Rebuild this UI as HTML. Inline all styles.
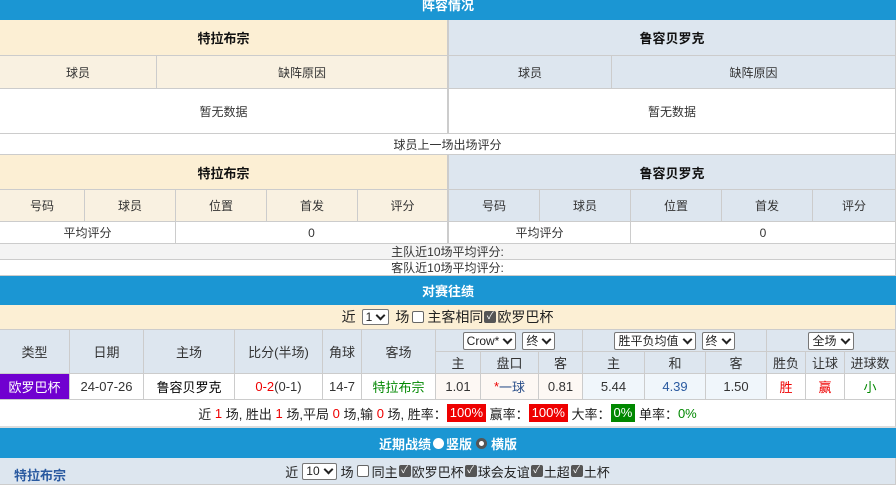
<!DOCTYPE html>
<html><head><meta charset="utf-8"><style>
*{box-sizing:border-box;margin:0;padding:0}
body{width:896px;height:485px;overflow:hidden;background:#fff;font-family:"Liberation Sans","Noto Sans CJK SC",sans-serif;font-size:12px;color:#333;position:relative}
.c{position:absolute;display:flex;align-items:center;justify-content:center;border-right:1px solid #ccc;border-bottom:1px solid #ccc;white-space:nowrap}
.bl{background:#1b96d3;color:#fff;font-weight:bold;font-size:13px;border:none}
.cr{background:#fcefd4}.cr2{background:#f9f1e1}.lb{background:#dde6ef}
.b{font-weight:bold;color:#111;font-size:13px}
.sel{display:inline-flex;align-items:center;border:1px solid #777;border-radius:2px;background:#fff;height:18px;padding:0 3px;font-size:12px;color:#222;margin:0 3px}
.sel:after{content:"";width:5px;height:5px;border-right:2px solid #222;border-bottom:2px solid #222;transform:rotate(45deg);margin:-3px 1px 0 5px}
.cb{display:inline-block;width:12px;height:12px;border:1px solid #666;border-radius:2px;background:#fff;margin:0 3px;vertical-align:middle}
.ck{display:inline-block;width:12px;height:12px;background:#555;border-radius:2px;color:#fff;font-size:10px;line-height:12px;text-align:center;margin:0 1px;vertical-align:middle}
.r{color:#e00}.g{color:#080}
.tag{display:inline-block;color:#fff;padding:0 3px;height:18px;line-height:18px}
</style></head><body>
<div class="c bl" style="left:0;top:0;width:896px;height:20px;overflow:hidden"><span style="position:relative;top:-6px">阵容情况</span></div>
<div class="c cr b" style="left:0;top:20px;width:449px;height:36px;border-right:2px solid #ccc">特拉布宗</div>
<div class="c lb b" style="left:449px;top:20px;width:447px;height:36px">鲁容贝罗克</div>
<div class="c cr2" style="left:0;top:56px;width:157px;height:33px">球员</div>
<div class="c cr2" style="left:157px;top:56px;width:292px;height:33px;border-right:2px solid #ccc">缺阵原因</div>
<div class="c lb" style="left:449px;top:56px;width:163px;height:33px">球员</div>
<div class="c lb" style="left:612px;top:56px;width:284px;height:33px">缺阵原因</div>
<div class="c" style="left:0;top:89px;width:449px;height:45px;border-right:2px solid #ccc">暂无数据</div>
<div class="c" style="left:449px;top:89px;width:447px;height:45px">暂无数据</div>
<div class="c" style="left:0;top:134px;width:896px;height:21px">球员上一场出场评分</div>
<div class="c cr b" style="left:0;top:155px;width:449px;height:35px;border-right:2px solid #ccc">特拉布宗</div>
<div class="c lb b" style="left:449px;top:155px;width:447px;height:35px">鲁容贝罗克</div>
<div class="c cr2" style="left:0;top:190px;width:85px;height:32px">号码</div>
<div class="c cr2" style="left:85px;top:190px;width:91px;height:32px">球员</div>
<div class="c cr2" style="left:176px;top:190px;width:91px;height:32px">位置</div>
<div class="c cr2" style="left:267px;top:190px;width:91px;height:32px">首发</div>
<div class="c cr2" style="left:358px;top:190px;width:91px;height:32px;border-right:2px solid #ccc">评分</div>
<div class="c lb" style="left:449px;top:190px;width:91px;height:32px">号码</div>
<div class="c lb" style="left:540px;top:190px;width:91px;height:32px">球员</div>
<div class="c lb" style="left:631px;top:190px;width:91px;height:32px">位置</div>
<div class="c lb" style="left:722px;top:190px;width:91px;height:32px">首发</div>
<div class="c lb" style="left:813px;top:190px;width:83px;height:32px">评分</div>
<div class="c" style="left:0;top:222px;width:176px;height:22px">平均评分</div>
<div class="c" style="left:176px;top:222px;width:273px;height:22px;border-right:2px solid #ccc">0</div>
<div class="c" style="left:449px;top:222px;width:182px;height:22px">平均评分</div>
<div class="c" style="left:631px;top:222px;width:265px;height:22px">0</div>
<div class="c" style="left:0;top:244px;width:896px;height:16px;background:#f4f4f4">主队近10场平均评分:</div>
<div class="c" style="left:0;top:260px;width:896px;height:16px">客队近10场平均评分:</div>
<div class="c bl" style="left:0;top:276px;width:896px;height:29px">对赛往绩</div>
<div class="c" style="left:0;top:305px;width:896px;height:25px;background:#fcefd4;font-size:14px;color:#222">近 <span class="sel" style="height:16px;margin:0 6px">1</span>场<span class="cb"></span>主客相同 <span class="ck">✓</span>欧罗巴杯</div>
<div class="c lb" style="left:0;top:330px;width:70px;height:44px;font-size:13px">类型</div>
<div class="c lb" style="left:70px;top:330px;width:74px;height:44px;font-size:13px">日期</div>
<div class="c lb" style="left:144px;top:330px;width:91px;height:44px;font-size:13px">主场</div>
<div class="c lb" style="left:235px;top:330px;width:88px;height:44px;font-size:13px">比分(半场)</div>
<div class="c lb" style="left:323px;top:330px;width:39px;height:44px;font-size:13px">角球</div>
<div class="c lb" style="left:362px;top:330px;width:74px;height:44px;font-size:13px">客场</div>
<div class="c lb" style="left:436px;top:330px;width:147px;height:22px"><span class="sel">Crow*</span><span class="sel">终</span></div>
<div class="c lb" style="left:583px;top:330px;width:184px;height:22px"><span class="sel">胜平负均值</span><span class="sel">终</span></div>
<div class="c lb" style="left:767px;top:330px;width:129px;height:22px"><span class="sel">全场</span></div>
<div class="c lb" style="left:436px;top:352px;width:45px;height:22px;font-size:13px">主</div>
<div class="c lb" style="left:481px;top:352px;width:58px;height:22px;font-size:13px">盘口</div>
<div class="c lb" style="left:539px;top:352px;width:44px;height:22px;font-size:13px">客</div>
<div class="c lb" style="left:583px;top:352px;width:62px;height:22px;font-size:13px">主</div>
<div class="c lb" style="left:645px;top:352px;width:61px;height:22px;font-size:13px">和</div>
<div class="c lb" style="left:706px;top:352px;width:61px;height:22px;font-size:13px">客</div>
<div class="c lb" style="left:767px;top:352px;width:39px;height:22px;font-size:13px">胜负</div>
<div class="c lb" style="left:806px;top:352px;width:39px;height:22px;font-size:13px">让球</div>
<div class="c lb" style="left:845px;top:352px;width:51px;height:22px;font-size:13px">进球数</div>
<div class="c" style="left:0;top:374px;width:70px;height:26px;background:#7000d0;color:#fff;font-size:13px">欧罗巴杯</div>
<div class="c" style="left:70px;top:374px;width:74px;height:26px;font-size:13px">24-07-26</div>
<div class="c" style="left:144px;top:374px;width:91px;height:26px;font-size:13px;color:#000">鲁容贝罗克</div>
<div class="c" style="left:235px;top:374px;width:88px;height:26px;font-size:13px"><span class="r">0-2</span>(0-1)</div>
<div class="c" style="left:323px;top:374px;width:39px;height:26px;font-size:13px">14-7</div>
<div class="c g" style="left:362px;top:374px;width:74px;height:26px;font-size:13px">特拉布宗</div>
<div class="c" style="left:436px;top:374px;width:45px;height:26px;font-size:13px;background:#fdf8f4">1.01</div>
<div class="c" style="left:481px;top:374px;width:58px;height:26px;font-size:13px;background:#fdf8f4;color:#2a4f8a"><span class="r">*</span>一球</div>
<div class="c" style="left:539px;top:374px;width:44px;height:26px;font-size:13px;background:#fdf8f4">0.81</div>
<div class="c" style="left:583px;top:374px;width:62px;height:26px;font-size:13px;background:#f0f6fb">5.44</div>
<div class="c" style="left:645px;top:374px;width:61px;height:26px;font-size:13px;background:#f0f6fb;color:#2a5aa0">4.39</div>
<div class="c" style="left:706px;top:374px;width:61px;height:26px;font-size:13px;background:#f0f6fb">1.50</div>
<div class="c r" style="left:767px;top:374px;width:39px;height:26px;font-size:13px">胜</div>
<div class="c r" style="left:806px;top:374px;width:39px;height:26px;font-size:13px">赢</div>
<div class="c g" style="left:845px;top:374px;width:51px;height:26px;font-size:13px">小</div>
<div class="c" style="left:0;top:400px;width:896px;height:28px;font-size:13px;color:#222;border-bottom:2px solid #ddd">近&nbsp;<span class="r">1</span>&nbsp;场, 胜出&nbsp;<span class="r">1</span>&nbsp;场,平局&nbsp;<span class="r">0</span>&nbsp;场,输&nbsp;<span class="r">0</span>&nbsp;场, 胜率：<span class="tag" style="background:#e00">100%</span>&nbsp;赢率：<span class="tag" style="background:#e00">100%</span>&nbsp;大率：<span class="tag" style="background:#080">0%</span>&nbsp;单率：<span class="g">0%</span></div>
<div class="c bl" style="left:0;top:428px;width:896px;height:30px">近期战绩<span style="display:inline-block;width:11px;height:11px;border-radius:50%;background:#fff;margin:0 2px"></span>竖版 <span style="display:inline-block;width:11px;height:11px;border-radius:50%;border:3px solid #555;background:#fff;margin:0 4px"></span>横版</div>
<div class="c lb" style="left:0;top:458px;width:896px;height:27px;font-size:13px;color:#222">近 <span class="sel" style="height:17px;margin:0 4px">10</span>场<span class="cb"></span>同主<span class="ck">✓</span>欧罗巴杯<span class="ck">✓</span>球会友谊<span class="ck">✓</span>土超<span class="ck">✓</span>土杯</div>
<div style="position:absolute;left:14px;top:465px;font-weight:bold;font-size:13px;color:#2a5aa0">特拉布宗</div>
</body></html>
